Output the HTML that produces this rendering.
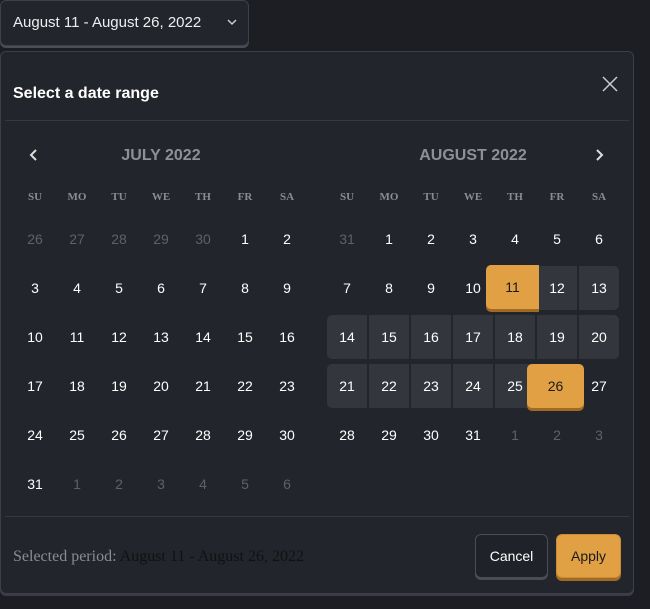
<!DOCTYPE html>
<html><head><meta charset="utf-8"><style>
*{box-sizing:border-box;margin:0;padding:0}
body{width:650px;height:609px;background:#1c1e24;position:relative;overflow:hidden;font-family:"Liberation Sans",sans-serif;color:#fff}
.trig{position:absolute;left:0;top:0;width:249px;height:46px;border:1px solid #3e4149;border-radius:6px;background:#22252c;box-shadow:0 2px 0 #4a4d55;font-size:15px;padding:13px 0 0 12px;color:#eee}
.trig svg{position:absolute;left:225px;top:17px}
.panel{position:absolute;left:0;top:51px;width:634px;height:543px;border:1px solid #3c3f47;border-radius:6px;background:#22252c;box-shadow:0 2px 0 #3a3d45}
.title{position:absolute;left:12px;top:33px;font-weight:bold;font-size:16px;color:#fff}
.hr{position:absolute;left:4px;width:624px;height:1px;background:#363941}
.month{position:absolute;top:95px;font-weight:bold;font-size:16px;color:#8e9096;width:294px;text-align:center}
.wd{position:absolute;top:139px;display:flex;width:294px}
.wd span{width:42px;text-align:center;font-family:"Liberation Serif",serif;font-weight:bold;font-size:11px;color:#8a8c92}
.grid{position:absolute;top:164px;width:294px}
.r{display:flex;height:49px}
.r span{width:40px;height:44px;margin:1px 1px 0;line-height:44px;text-align:center;font-size:14px;color:#fff;border-radius:0}
.r span.m{color:#5e6168}
.r span.g{background:#34363e}
.o{position:absolute;background:#e0a043;color:#1a1a1a;border-radius:5px;box-shadow:0 3px 0 #a06a22;text-align:center;font-size:14px}
.btn{position:absolute;top:482px;height:44px;border-radius:6px;font-size:14px;text-align:center;line-height:42px}
</style></head><body>
<div class="trig">August 11 - August 26, 2022<svg width="12" height="8" viewBox="0 0 12 8"><path d="M2 2l4 4 4-4" stroke="#ccc" stroke-width="1.5" fill="none"/></svg></div>
<div class="panel">
<div class="title">Select a date range</div>
<svg style="position:absolute;left:601px;top:24px" width="16" height="16" viewBox="0 0 16 16"><path d="M1 1l14 14M15 1L1 15" stroke="#ccc" stroke-width="1.5"/></svg>
<div class="hr" style="top:68px"></div>
<div class="hr" style="top:464px"></div>
<svg style="position:absolute;left:28px;top:96px" width="10" height="14" viewBox="0 0 10 14"><path d="M7 2L2 7l5 5" stroke="#ddd" stroke-width="2" fill="none"/></svg>
<svg style="position:absolute;left:593px;top:96px" width="10" height="14" viewBox="0 0 10 14"><path d="M3 2l5 5-5 5" stroke="#ddd" stroke-width="2" fill="none"/></svg>
<div class="month" style="left:13px">JULY 2022</div>
<div class="month" style="left:325px">AUGUST 2022</div>
<div class="wd" style="left:13px"><span>SU</span><span>MO</span><span>TU</span><span>WE</span><span>TH</span><span>FR</span><span>SA</span></div>
<div class="wd" style="left:325px"><span>SU</span><span>MO</span><span>TU</span><span>WE</span><span>TH</span><span>FR</span><span>SA</span></div>
<div class="grid" style="left:13px">
<div class="r"><span class="m">26</span><span class="m">27</span><span class="m">28</span><span class="m">29</span><span class="m">30</span><span>1</span><span>2</span></div>
<div class="r"><span>3</span><span>4</span><span>5</span><span>6</span><span>7</span><span>8</span><span>9</span></div>
<div class="r"><span>10</span><span>11</span><span>12</span><span>13</span><span>14</span><span>15</span><span>16</span></div>
<div class="r"><span>17</span><span>18</span><span>19</span><span>20</span><span>21</span><span>22</span><span>23</span></div>
<div class="r"><span>24</span><span>25</span><span>26</span><span>27</span><span>28</span><span>29</span><span>30</span></div>
<div class="r"><span>31</span><span class="m">1</span><span class="m">2</span><span class="m">3</span><span class="m">4</span><span class="m">5</span><span class="m">6</span></div>
</div>
<div class="grid" style="left:325px">
<div class="r"><span class="m">31</span><span>1</span><span>2</span><span>3</span><span>4</span><span>5</span><span>6</span></div>
<div class="r"><span>7</span><span>8</span><span>9</span><span>10</span><span>11</span><span class="g">12</span><span class="g" style="border-radius:0 5px 5px 0">13</span></div>
<div class="r"><span class="g" style="border-radius:5px 0 0 5px">14</span><span class="g">15</span><span class="g">16</span><span class="g">17</span><span class="g">18</span><span class="g">19</span><span class="g" style="border-radius:0 5px 5px 0">20</span></div>
<div class="r"><span class="g" style="border-radius:5px 0 0 5px">21</span><span class="g">22</span><span class="g">23</span><span class="g">24</span><span class="g">25</span><span>26</span><span>27</span></div>
<div class="r"><span>28</span><span>29</span><span>30</span><span>31</span><span class="m">1</span><span class="m">2</span><span class="m">3</span></div>
</div>
<div class="o" style="left:485px;top:213px;width:53px;height:44px;line-height:44px;border-radius:5px 0 0 5px">11</div>
<div class="o" style="left:526px;top:312px;width:57px;height:44px;line-height:44px">26</div>
<div style="position:absolute;left:12px;top:496px;font-family:'Liberation Serif',serif;font-size:16px;color:#8a8c92">Selected period: <span style="color:#111">August 11 - August 26, 2022</span></div>
<div class="btn" style="left:474px;width:73px;border:1px solid #4a4d55;background:#202229;color:#fff;box-shadow:0 2px 0 #4a4d55">Cancel</div>
<div class="btn" style="left:555px;width:65px;background:#e0a043;border:1px solid #c98b35;color:#1a1a1a;box-shadow:0 3px 0 #a06a22">Apply</div>
</div>
</body></html>
